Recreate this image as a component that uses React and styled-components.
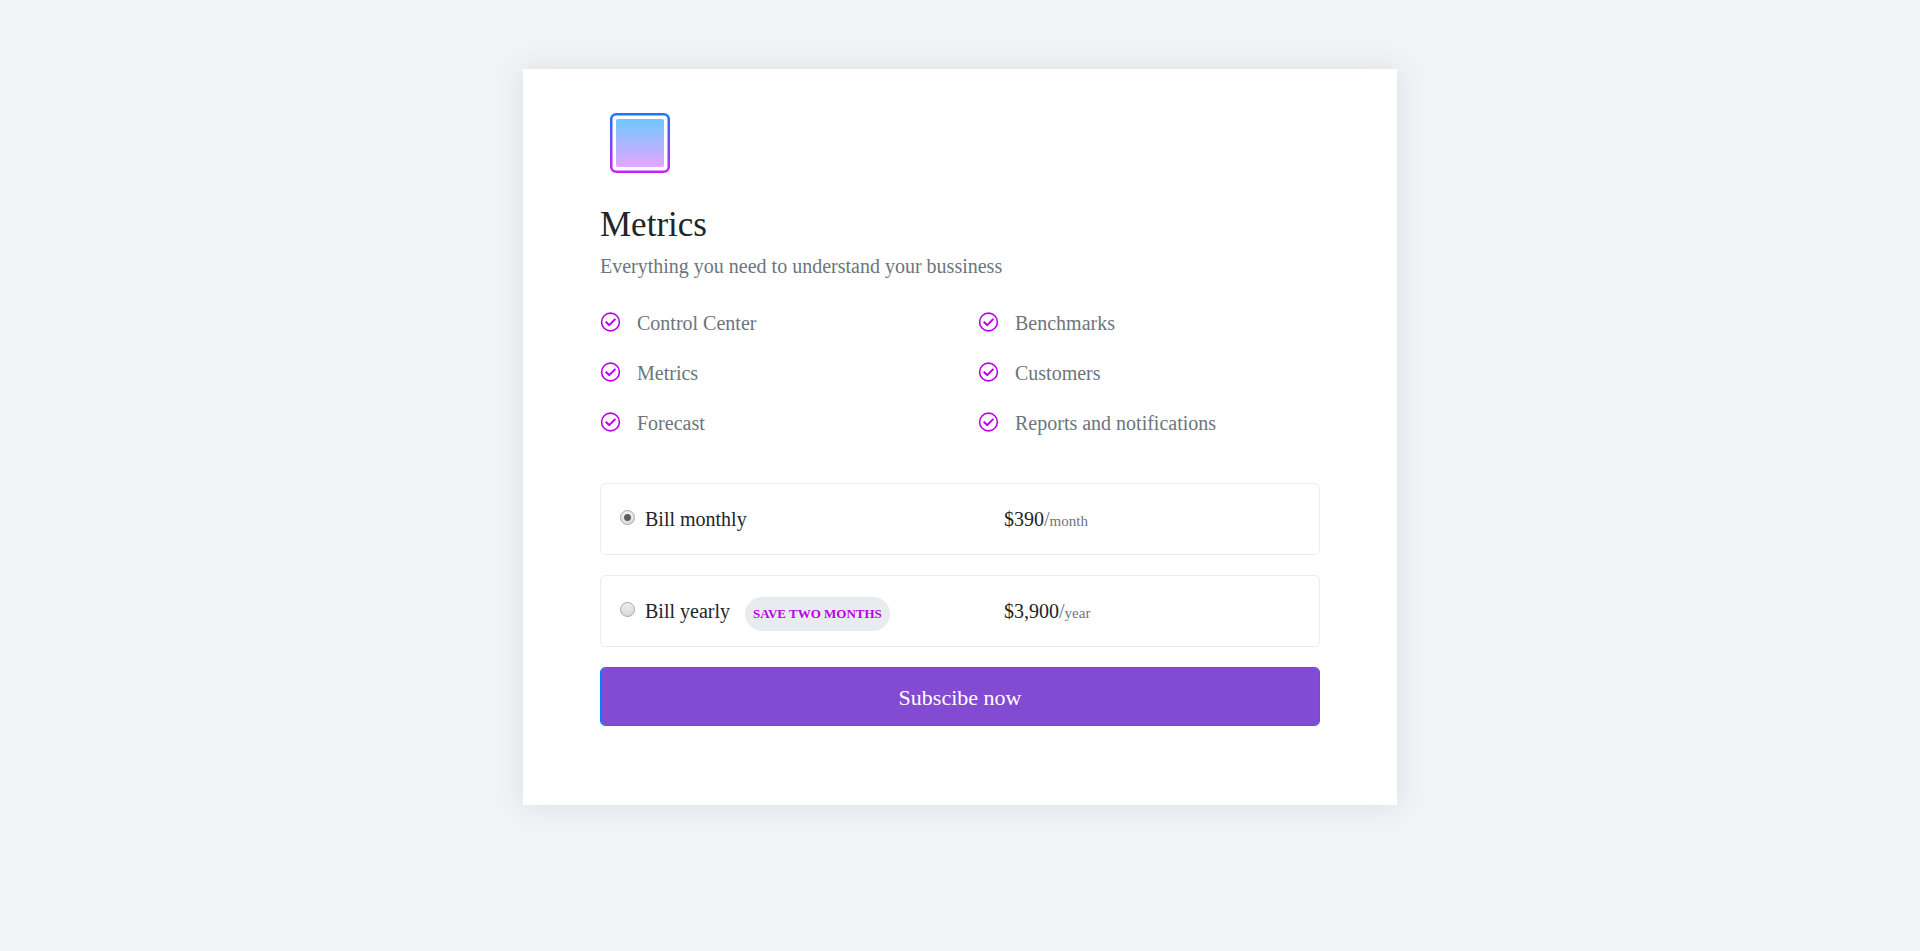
import React, { useState } from 'react';
import styled, { createGlobalStyle } from 'styled-components';

const GlobalStyle = createGlobalStyle`
  *, *::before, *::after { box-sizing: border-box; }
  body {
    margin: 0;
    background: #f1f3f5;
    color: #212529;
    font-family: "Liberation Serif", "Times New Roman", serif;
    font-size: 20px;
    line-height: 30px;
  }
`;

const Page = styled.main`
  display: flex;
  justify-content: center;
  padding: 69px 16px;
`;

const Card = styled.section`
  width: 100%;
  max-width: 874px;
  padding: 34px 77px 79px;
  background: #fff;
  box-shadow: 0 0 25px #dae1e5;
`;

const Logo = styled.svg`
  display: block;
  width: 80px;
  height: 80px;
`;

const Title = styled.h1`
  margin: 21px 0 0;
  font-size: 35px;
  font-weight: 400;
  line-height: 42px;
`;

const Subtitle = styled.p`
  margin: 5px 0 0;
  color: #6c757d;
`;

const Features = styled.ul`
  display: grid;
  grid-template-columns: 1fr 1fr;
  gap: 20px 36px;
  margin: 27px 0 45px;
  padding: 0;
  list-style: none;
`;

const Feature = styled.li`
  display: flex;
  gap: 16px;
  color: #6c757d;
`;

const CheckIcon = styled.svg`
  flex: none;
  width: 21px;
  height: 21px;
  margin-top: 4px;
`;

const Form = styled.form`
  display: grid;
  gap: 20px;
`;

const Option = styled.label`
  display: grid;
  grid-template-columns: 387px 1fr;
  align-items: start;
  padding: 18px 16px;
  border: 1px solid #e9ecef;
  border-radius: 6px;
  cursor: pointer;
`;

const Plan = styled.span`
  display: flex;
  align-items: baseline;
  height: 34px;
  line-height: 34px;
`;

const Radio = styled.input`
  appearance: none;
  align-self: flex-start;
  width: 15px;
  height: 15px;
  margin: 8px 10px 0 3px;
  border: 1px solid #a6a6a6;
  border-radius: 50%;
  background: linear-gradient(#eee, #d8d8d8);
  &:checked {
    background: radial-gradient(circle, #5c5c5c 3px, transparent 4px), linear-gradient(#eee, #dedede);
  }
`;

const Badge = styled.span`
  margin-left: 15px;
  padding: 0 8px;
  border-radius: 17px;
  background: #e9ecef;
  color: #b900e6;
  font-size: 13px;
  font-weight: 700;
  white-space: nowrap;
`;

const Price = styled.span`
  line-height: 34px;
`;

const Period = styled.span`
  color: #6c757d;
`;

const Unit = styled.small`
  font-size: 15px;
  line-height: 15px;
`;

const Submit = styled.button`
  height: 59px;
  padding: 2px 16px 0;
  border: 1px solid #007bff;
  border-radius: 5px;
  background: #834bd1;
  background-clip: padding-box;
  color: #fff;
  font: inherit;
  font-size: 22px;
  cursor: pointer;
`;

const features = ['Control Center', 'Benchmarks', 'Metrics', 'Customers', 'Forecast', 'Reports and notifications'];

const plans = [
  { id: 'monthly', name: 'Bill monthly', price: '$390', unit: 'month' },
  { id: 'yearly', name: 'Bill yearly', price: '$3,900', unit: 'year', badge: 'SAVE TWO MONTHS' },
];

function Check() {
  return (
    <CheckIcon viewBox="0 0 21 21" fill="none" stroke="#b900e6" aria-hidden="true">
      <circle cx="10.5" cy="10" r="8.9" strokeWidth="1.6" />
      <path d="M5.7 9.8 9.2 13.1 15.4 6.9" strokeWidth="2" />
    </CheckIcon>
  );
}

export default function App() {
  const [selected, setSelected] = useState('monthly');
  return (
    <>
      <GlobalStyle />
      <Page>
        <Card>
          <Logo viewBox="0 0 80 80" aria-hidden="true">
            <defs>
              <linearGradient id="frame" x1="0" y1="0" x2="0" y2="1">
                <stop offset="0" stopColor="#1f75fe" />
                <stop offset="1" stopColor="#c822f5" />
              </linearGradient>
              <linearGradient id="fill" x1="0" y1="0" x2="0" y2="1">
                <stop offset="0" stopColor="#6dc8ff" />
                <stop offset="1" stopColor="#e6a6ff" />
              </linearGradient>
            </defs>
            <rect x="11.25" y="11.25" width="57.5" height="57.5" rx="5" fill="none" stroke="url(#frame)" strokeWidth="2.5" />
            <rect x="16" y="16" width="48" height="48" rx="2" fill="url(#fill)" />
          </Logo>
          <Title>Metrics</Title>
          <Subtitle>Everything you need to understand your bussiness</Subtitle>
          <Features>
            {features.map((name) => (
              <Feature key={name}>
                <Check />
                {name}
              </Feature>
            ))}
          </Features>
          <Form onSubmit={(event) => event.preventDefault()}>
            {plans.map((plan) => (
              <Option key={plan.id}>
                <Plan>
                  <Radio
                    type="radio"
                    name="billing"
                    value={plan.id}
                    checked={selected === plan.id}
                    onChange={() => setSelected(plan.id)}
                  />
                  {plan.name}
                  {plan.badge && <Badge>{plan.badge}</Badge>}
                </Plan>
                <Price>
                  {plan.price}
                  <Period>
                    /<Unit>{plan.unit}</Unit>
                  </Period>
                </Price>
              </Option>
            ))}
            <Submit type="submit">Subscibe now</Submit>
          </Form>
        </Card>
      </Page>
    </>
  );
}
